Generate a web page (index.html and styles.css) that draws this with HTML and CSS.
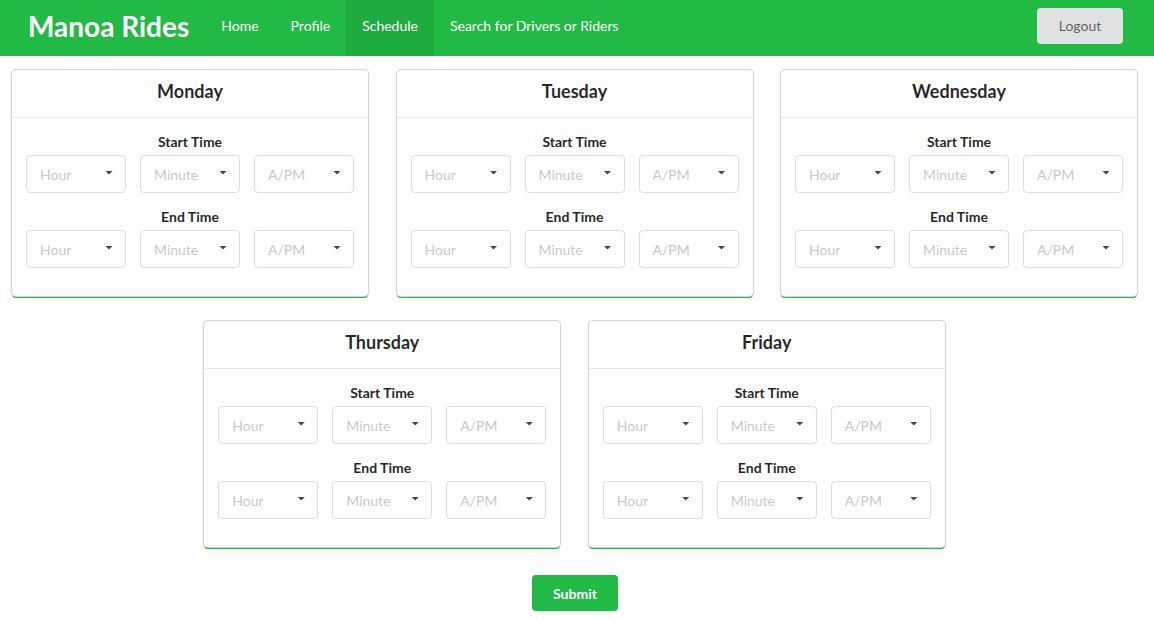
FILE: index.html
```html
<!DOCTYPE html>
<html>
<head>
<meta charset="utf-8">
<link rel="stylesheet" href="styles.css">
</head>
<body>
<nav class="navbar">
  <div class="brand">Manoa Rides</div>
  <a class="nav-item">Home</a>
  <a class="nav-item">Profile</a>
  <a class="nav-item active">Schedule</a>
  <a class="nav-item">Search for Drivers or Riders</a>
  <div class="spacer"></div>
  <button class="logout">Logout</button>
</nav>
<main class="schedule">
  <div class="cards">
    <section class="card">
      <div class="card-header">Monday</div>
      <div class="card-body">
        <div class="label">Start Time</div>
        <div class="selects">
          <div class="dropdown"><span>Hour</span><i class="caret"></i></div>
          <div class="dropdown"><span>Minute</span><i class="caret"></i></div>
          <div class="dropdown"><span>A/PM</span><i class="caret"></i></div>
        </div>
        <div class="label">End Time</div>
        <div class="selects">
          <div class="dropdown"><span>Hour</span><i class="caret"></i></div>
          <div class="dropdown"><span>Minute</span><i class="caret"></i></div>
          <div class="dropdown"><span>A/PM</span><i class="caret"></i></div>
        </div>
      </div>
    </section>
    <section class="card">
      <div class="card-header">Tuesday</div>
      <div class="card-body">
        <div class="label">Start Time</div>
        <div class="selects">
          <div class="dropdown"><span>Hour</span><i class="caret"></i></div>
          <div class="dropdown"><span>Minute</span><i class="caret"></i></div>
          <div class="dropdown"><span>A/PM</span><i class="caret"></i></div>
        </div>
        <div class="label">End Time</div>
        <div class="selects">
          <div class="dropdown"><span>Hour</span><i class="caret"></i></div>
          <div class="dropdown"><span>Minute</span><i class="caret"></i></div>
          <div class="dropdown"><span>A/PM</span><i class="caret"></i></div>
        </div>
      </div>
    </section>
    <section class="card">
      <div class="card-header">Wednesday</div>
      <div class="card-body">
        <div class="label">Start Time</div>
        <div class="selects">
          <div class="dropdown"><span>Hour</span><i class="caret"></i></div>
          <div class="dropdown"><span>Minute</span><i class="caret"></i></div>
          <div class="dropdown"><span>A/PM</span><i class="caret"></i></div>
        </div>
        <div class="label">End Time</div>
        <div class="selects">
          <div class="dropdown"><span>Hour</span><i class="caret"></i></div>
          <div class="dropdown"><span>Minute</span><i class="caret"></i></div>
          <div class="dropdown"><span>A/PM</span><i class="caret"></i></div>
        </div>
      </div>
    </section>
    <section class="card">
      <div class="card-header">Thursday</div>
      <div class="card-body">
        <div class="label">Start Time</div>
        <div class="selects">
          <div class="dropdown"><span>Hour</span><i class="caret"></i></div>
          <div class="dropdown"><span>Minute</span><i class="caret"></i></div>
          <div class="dropdown"><span>A/PM</span><i class="caret"></i></div>
        </div>
        <div class="label">End Time</div>
        <div class="selects">
          <div class="dropdown"><span>Hour</span><i class="caret"></i></div>
          <div class="dropdown"><span>Minute</span><i class="caret"></i></div>
          <div class="dropdown"><span>A/PM</span><i class="caret"></i></div>
        </div>
      </div>
    </section>
    <section class="card">
      <div class="card-header">Friday</div>
      <div class="card-body">
        <div class="label">Start Time</div>
        <div class="selects">
          <div class="dropdown"><span>Hour</span><i class="caret"></i></div>
          <div class="dropdown"><span>Minute</span><i class="caret"></i></div>
          <div class="dropdown"><span>A/PM</span><i class="caret"></i></div>
        </div>
        <div class="label">End Time</div>
        <div class="selects">
          <div class="dropdown"><span>Hour</span><i class="caret"></i></div>
          <div class="dropdown"><span>Minute</span><i class="caret"></i></div>
          <div class="dropdown"><span>A/PM</span><i class="caret"></i></div>
        </div>
      </div>
    </section>
  </div>
  <div class="actions">
    <button class="submit">Submit</button>
  </div>
</main>
</body>
</html>
```
FILE: styles.css
```css
* { box-sizing: border-box; }
html, body { margin: 0; padding: 0; }
body {
  font-family: Lato, "Helvetica Neue", Arial, sans-serif;
  font-size: 14px;
  color: rgba(0,0,0,.87);
  background: #fff;
}
.navbar {
  display: flex;
  align-items: center;
  height: 56px;
  background: #21ba45;
  padding: 0 31px 0 28px;
}
.brand {
  color: #fff;
  font-size: 28px;
  font-weight: 700;
  margin-right: 16px;
  padding-bottom: 4px;
}
.nav-item {
  display: flex;
  align-items: center;
  height: 56px;
  padding: 0 16px 6px;
  color: #fff;
  font-size: 14px;
}
.nav-item.active { background: rgba(0,0,0,.08); }
.spacer { flex: 1; }
.logout {
  font-family: Lato, sans-serif;
  font-size: 14px;
  font-weight: 400;
  color: rgba(0,0,0,.6);
  background: #e0e1e2;
  border: 0;
  border-radius: 4px;
  width: 86px;
  height: 36px;
  margin-top: -4px;
  padding-bottom: 2px;
}
.schedule { padding: 14px 0 0; }
.cards {
  display: flex;
  flex-wrap: wrap;
  justify-content: center;
  column-gap: 28.5px;
  row-gap: 25px;
  padding: 0 5px 0 0;
}
.card {
  width: 356px;
  border-radius: 4px;
  background: #fff;
  box-shadow: 0 0 0 1px #d4d4d5, 0 2px 0 0 #21ba45, 0 1px 3px 0 #d4d4d5;
}
.card-header {
  height: 48px;
  display: flex;
  align-items: center;
  justify-content: center;
  padding-bottom: 5px;
  font-size: 18px;
  font-weight: 700;
  color: rgba(0,0,0,.85);
  border-bottom: 1px solid rgba(34,36,38,.1);
}
.card-body {
  padding: 15px 14px 28px;
  display: flex;
  flex-direction: column;
}
.label {
  text-align: center;
  font-weight: 700;
  font-size: 14px;
  line-height: 17px;
  margin-bottom: 5px;
}
.selects {
  display: flex;
  gap: 14px;
  margin-bottom: 15px;
}
.selects:last-child { margin-bottom: 0; }
.dropdown {
  flex: 1;
  height: 38px;
  border: 1px solid rgba(34,36,38,.15);
  border-radius: 4px;
  display: flex;
  align-items: center;
  justify-content: space-between;
  padding: 0 12px 0 13px;
  color: rgba(191,191,191,.87);
  font-size: 14px;
}
.caret {
  display: block;
  width: 8px;
  height: 4px;
  background: rgba(0,0,0,.72);
  clip-path: polygon(0 0, 100% 0, 50% 100%);
  margin-top: -3px;
}
.actions {
  display: flex;
  justify-content: center;
  padding-top: 28px;
  padding-right: 4px;
}
.submit {
  font-family: Lato, sans-serif;
  font-size: 14px;
  font-weight: 700;
  color: #fff;
  background: #21ba45;
  border: 0;
  border-radius: 4px;
  width: 86px;
  height: 36px;
}
```
